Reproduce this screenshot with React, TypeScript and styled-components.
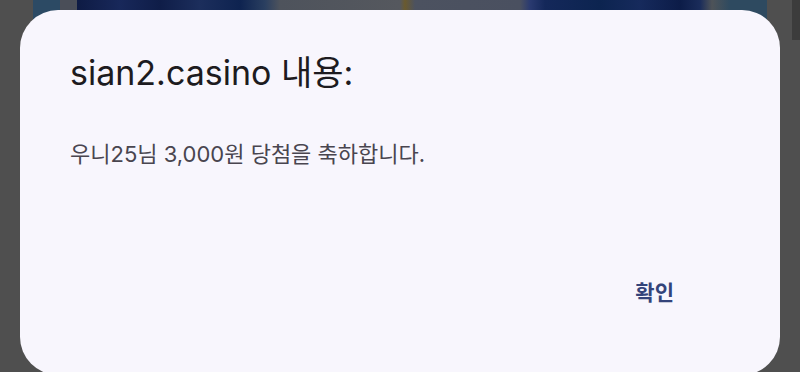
import React from "react";
import styled, { createGlobalStyle } from "styled-components";

const Global = createGlobalStyle`
  html, body { margin: 0; padding: 0; background: #4f4f4f; }
  #root { width: 800px; height: 372px; }
`;

const Screen = styled.div`
  width: 800px;
  height: 372px;
  overflow: hidden;
  box-sizing: border-box;
  padding: 10px 20px 0;
  background:
    linear-gradient(to right,
      #4f4f4f 0px, #4f4f4f 33px,
      #2c4a64 33px, #2c4a64 60px,
      #4a4e58 60px, #4a4e58 77px,
      #0e1b44 77px, #18285a 120px, #0f1d48 160px, #1c2e5c 200px, #0e2350 240px, #2a3f60 265px,
      #4e535c 280px, #55585e 400px, #6a5a2e 405px, #4c5260 415px,
      #4a5060 520px, #2a3a70 530px, #14285a 545px, #0c2450 600px,
      #162a5c 640px, #0c1c48 680px, #1a2c5a 700px, #4e5358 712px,
      #2e4a60 730px, #2e4a60 767px,
      #4f4f4f 767px, #4f4f4f 792px, #3c3c3c 792px)
      top left / 100% 40px no-repeat,
    #4f4f4f;
`;

const Dialog = styled.div`
  box-sizing: border-box;
  width: 760px;
  height: 365px;
  background: #f8f6fd;
  border-radius: 38px;
  padding: 40px 50px 0;
  display: flex;
  flex-direction: column;
  font-family: Inter, "Noto Sans CJK KR", sans-serif;
`;

const Title = styled.h1`
  margin: 0;
  font-size: 34px;
  line-height: 46px;
  font-weight: 400;
  color: #1d1b20;
`;

const Message = styled.p`
  margin: 43px 0 0;
  font-size: 22px;
  line-height: 30px;
  font-weight: 400;
  color: #49454f;
`;

const Actions = styled.div`
  display: flex;
  justify-content: flex-end;
  margin-top: 110px;
  padding-right: 56px;
`;

const TextButton = styled.button`
  border: none;
  background: none;
  padding: 0;
  font-family: Inter, "Noto Sans CJK KR", sans-serif;
  font-size: 21px;
  line-height: 28px;
  font-weight: 600;
  color: #34447a;
  cursor: pointer;
`;

export default function App() {
  return (
    <>
      <Global />
      <Screen>
        <Dialog>
          <Title>sian2.casino 내용:</Title>
          <Message>우니25님 3,000원 당첨을 축하합니다.</Message>
          <Actions>
            <TextButton>확인</TextButton>
          </Actions>
        </Dialog>
      </Screen>
    </>
  );
}
